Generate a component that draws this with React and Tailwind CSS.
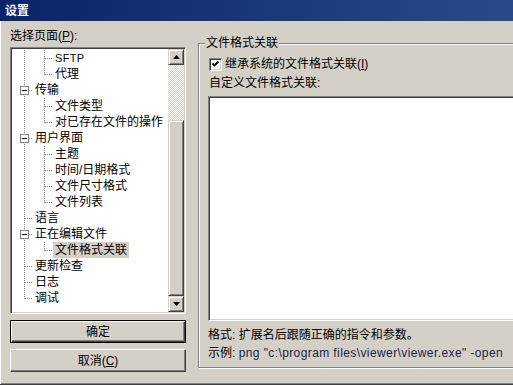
import React from "react";

const sunken =
  "border border-t-[#808080] border-l-[#808080] border-b-white border-r-white p-[1px] shadow-[inset_1px_1px_0_#404040,inset_-1px_-1px_0_#d4d0c8]";
const raised =
  "border border-t-[#d4d0c8] border-l-[#d4d0c8] border-b-[#404040] border-r-[#404040] shadow-[inset_1px_1px_0_#fff,inset_-1px_-1px_0_#808080]";

const TREE = [
  { label: "SFTP", level: 1, latin: true },
  { label: "代理", level: 1, last: true },
  { label: "传输", level: 0, box: true },
  { label: "文件类型", level: 1 },
  { label: "对已存在文件的操作", level: 1, last: true },
  { label: "用户界面", level: 0, box: true },
  { label: "主题", level: 1 },
  { label: "时间/日期格式", level: 1 },
  { label: "文件尺寸格式", level: 1 },
  { label: "文件列表", level: 1, last: true },
  { label: "语言", level: 0 },
  { label: "正在编辑文件", level: 0, box: true },
  { label: "文件格式关联", level: 1, last: true, selected: true },
  { label: "更新检查", level: 0 },
  { label: "日志", level: 0 },
  { label: "调试", level: 0, last: true },
];

function TreeLines({ level, last, box }) {
  const width = (level + 1) * 20;
  const x = level * 20 + 11.5;
  return (
    <svg width={width} height="16" className="shrink-0" shapeRendering="crispEdges">
      {level > 0 && (
        <line x1="11.5" y1="0" x2="11.5" y2="16" stroke="#808080" strokeDasharray="1 1" />
      )}
      <line x1={x} y1="0" x2={x} y2={last ? 9 : 16} stroke="#808080" strokeDasharray="1 1" />
      <line x1={x} y1="8.5" x2={level * 20 + 20} y2="8.5" stroke="#808080" strokeDasharray="1 1" />
      {box && (
        <g>
          <rect x={level * 20 + 7.5} y="4.5" width="8" height="8" fill="#fff" stroke="#808080" />
          <line x1={level * 20 + 9} y1="8.5" x2={level * 20 + 14} y2="8.5" stroke="#000" />
        </g>
      )}
    </svg>
  );
}

function Arrow({ up }) {
  return (
    <svg width="7" height="4" viewBox="0 0 7 4">
      <polygon points={up ? "3.5,0 7,4 0,4" : "0,0 7,0 3.5,4"} fill="#000" />
    </svg>
  );
}

export default function App() {
  return (
    <div className="w-[513px] h-[385px] overflow-hidden bg-[#d4d0c8] text-[12px] text-black [font-family:'Liberation_Sans','Noto_Sans_CJK_SC',sans-serif]">
      <div className="w-[540px] h-[385px] flex flex-col">
        {/* title bar */}
        <div className="h-[21px] shrink-0 flex items-center pl-[5px] bg-linear-to-r from-[#0a246a] to-[#2a4c8c] text-white font-bold leading-none">
          设置
        </div>

        <div className="flex-1 flex border-b border-b-[#404040] shadow-[inset_1px_0_0_#fff,inset_0_-1px_0_#808080]">
          {/* left column */}
          <div className="ml-[10px] w-[176px] pt-[7px] flex flex-col">
            <div className="h-[16px] leading-[16px]">
              选择页面(<span className="underline">P</span>):
            </div>

            <div className={`mt-[3px] h-[267px] bg-white flex ${sunken}`}>
              <div className="flex-1 min-w-0 pt-[1px] pl-[1px] overflow-hidden">
                {TREE.map((item) => (
                  <div key={item.label} className="flex h-[16px] items-center">
                    <TreeLines level={item.level} last={item.last} box={item.box} />
                    <span
                      className={`h-[16px] leading-[16px] px-[2px] whitespace-nowrap ${
                        item.selected ? "bg-[#d4d0c8]" : ""
                      } ${item.latin ? "text-[11px] tracking-[0.3px]" : ""}`}
                    >
                      {item.label}
                    </span>
                  </div>
                ))}
              </div>

              {/* scrollbar */}
              <div className="w-[16px] shrink-0 flex flex-col">
                <div className={`h-[16px] flex items-center justify-center bg-[#d4d0c8] ${raised}`}>
                  <Arrow up />
                </div>
                <div className="h-[55px] bg-[repeating-conic-gradient(#fff_0_25%,#d4d0c8_0_50%)] bg-[length:2px_2px]" />
                <div className={`h-[176px] bg-[#d4d0c8] ${raised}`} />
                <div className={`h-[16px] flex items-center justify-center bg-[#d4d0c8] ${raised}`}>
                  <Arrow />
                </div>
              </div>
            </div>

            <button className="mt-[6px] h-[23px] w-full border border-black bg-[#d4d0c8] shadow-[inset_1px_1px_0_#fff,inset_-1px_-1px_0_#404040,inset_-2px_-2px_0_#808080] leading-none">
              确定
            </button>
            <button className="mt-[6px] h-[23px] w-full border border-t-white border-l-white border-b-[#404040] border-r-[#404040] bg-[#d4d0c8] shadow-[inset_-1px_-1px_0_#808080] leading-none">
              取消(<span className="underline">C</span>)
            </button>
          </div>

          {/* right column */}
          <div className="ml-[12px] pt-[22px]">
            <div className="w-[332px] h-[325px] border border-[#808080] shadow-[inset_1px_1px_0_#fff,1px_1px_0_#fff] pl-[9px]">
              <div className="-mt-[9px] -ml-[3px] w-fit px-[1px] h-[16px] leading-[16px] bg-[#d4d0c8]">
                文件格式关联
              </div>

              <div className="mt-[5px] h-[16px] flex items-start">
                <div className="mt-[2px] ml-[1px] w-[13px] h-[13px] border border-t-[#808080] border-l-[#808080] border-b-white border-r-white bg-white shadow-[inset_1px_1px_0_#404040,inset_-1px_-1px_0_#d4d0c8] flex items-center justify-center">
                  <svg width="9" height="9" viewBox="0 0 9 9">
                    <polyline points="1.5,3.5 3.5,5.5 7.5,1.5" fill="none" stroke="#000" strokeWidth="1.9" />
                  </svg>
                </div>
                <span className="ml-[3px] leading-[16px]">
                  继承系统的文件格式关联(<span className="underline">I</span>)
                </span>
              </div>

              <div className="mt-[3px] pl-[1px] h-[16px] leading-[16px]">自定义文件格式关联:</div>

              <div className={`mt-[5px] w-[314px] h-[225px] bg-white ${sunken}`} />

              <div className="mt-[6px] h-[16px] leading-[16px]">格式: 扩展名后跟随正确的指令和参数。</div>
              <div className="mt-[2px] h-[16px] leading-[16px] whitespace-nowrap">
                示例: <span className="tracking-[0.4px] text-[#1a1f4a]">png "c:\program files\viewer\viewer.exe" -open</span>
              </div>
            </div>
          </div>
        </div>
      </div>
    </div>
  );
}
